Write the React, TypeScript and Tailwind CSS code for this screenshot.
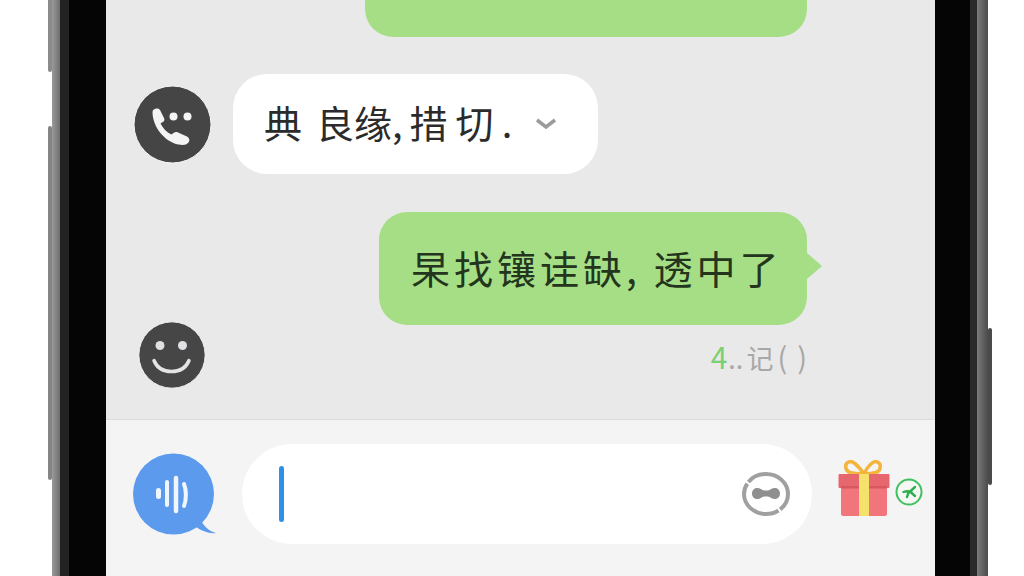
import React from 'react';

const cjk = "font-['Noto_Sans_CJK_SC','Noto_Sans',sans-serif]";

const PhoneAvatar = () => (
  <svg width="79" height="79" viewBox="0 0 79 79" className="shrink-0">
    <circle cx="39.500" cy="39.500" r="38.500" fill="#454545" stroke="#f5f5f5" strokeWidth="1" />
    <path d="M19.500 27c0-3 5-5 7.500-2l4 8c1 2 0 3.500-2 4.500l-1.500 1c2.500 5 6.500 9 11 11l2-1.500c1.500-1 3-1.300 4.500-.5l9 4c2.500 1.300 3 4 1.500 6-2 2.500-5.500 3-10 2C32 57 19.500 42 19.500 27z" fill="#f4f4f4" />
    <circle cx="40.500" cy="31.500" r="4" fill="#f4f4f4" />
    <circle cx="54.500" cy="31.500" r="4" fill="#f4f4f4" />
  </svg>
);

const SmileAvatar = () => (
  <svg width="68" height="68" viewBox="0 0 68 68" className="shrink-0">
    <circle cx="34" cy="34" r="33.200" fill="#464646" stroke="#f5f5f5" strokeWidth="1" />
    <circle cx="22" cy="24.500" r="4.500" fill="#dfdfe4" />
    <circle cx="44.500" cy="24.500" r="4.500" fill="#dfdfe4" />
    <path d="M16 39.500c3 7.500 10 11 17.500 11s14.500-3.500 17.500-11" fill="none" stroke="#e4e4e4" strokeWidth="3.500" strokeLinecap="round" />
  </svg>
);

const VoiceIcon = () => (
  <svg width="84" height="84" viewBox="0 0 84 84" className="shrink-0">
    <circle cx="40.500" cy="41" r="40.500" fill="#5b9aec" />
    <path d="M66 64c3 7 9 14 17 16-6 1-15-2-23-8z" fill="#5b9aec" />
    <g fill="none" stroke="#f1f6fd" strokeLinecap="round">
      <path d="M25.500 37.500v6" strokeWidth="5" />
      <path d="M34 29v23" strokeWidth="4" />
      <path d="M43 25v33" strokeWidth="4.500" />
      <path d="M51 31c2.500 6 2.500 16 0 22" strokeWidth="4" />
    </g>
  </svg>
);

const LinkIcon = () => (
  <svg width="48" height="44" viewBox="0 0 48 44" className="shrink-0">
    <ellipse cx="24" cy="22" rx="22" ry="20" fill="none" stroke="#a0a0a0" strokeWidth="4" pathLength="100" strokeDasharray="13.500 1.500 43.500 1.500 40.500 0" />
    <path d="M15 16c3 0 5 2 7 2.500h4c2-.5 4-2.500 7-2.500 3 0 5 2.500 5 5.500s-2 5.500-5 5.500c-3 0-5-2-7-2.500h-4c-2 .5-4 2.500-7 2.500-3 0-5-2.500-5-5.500s2-5.500 5-5.500z" fill="#8f8f8f" />
  </svg>
);

const GiftIcon = () => (
  <svg width="52" height="57" viewBox="0 0 52 57" className="shrink-0">
    <path d="M26 14C20 5 14 .5 11 1.800 6 3.500 7 11 12 12.500c4 1.300 10 1.500 14 1.500zM26 14c4-9 10-13.500 13-12.200 5 1.700 4 9.200-1 10.700-4 1.300-8 1.500-12 1.500z" fill="none" stroke="#f4b53c" strokeWidth="3.500" />
    <rect x="3" y="26" width="46" height="30" rx="2" fill="#f0767c" />
    <rect x="0.500" y="14" width="51" height="14" rx="1" fill="#e6676e" />
    <rect x="3" y="26" width="46" height="2.500" fill="#d9585f" />
    <rect x="21" y="14" width="10" height="42" fill="#f5e26a" />
  </svg>
);

const GreenBadge = () => (
  <svg width="28" height="28" viewBox="0 0 28 28" className="shrink-0">
    <circle cx="14" cy="14" r="12.500" fill="#f5f8f3" stroke="#3fc05f" strokeWidth="2" />
    <path d="M20 9l-5 4.500 5 4.500M8.500 14c2.500-1 4.500-1 6.500-.5-1.500 1-2.500 3-3 5.500" fill="none" stroke="#2fae50" strokeWidth="2.400" strokeLinecap="round" />
  </svg>
);

export default function App() {
  return (
    <div className={`flex w-[1024px] h-[576px] overflow-hidden bg-white ${cjk}`}>
      {/* left edge of the phone */}
      <div className="flex h-full w-[106px] shrink-0">
        <div className="w-[48px] shrink-0" />
        <div className="flex w-[4px] shrink-0 flex-col">
          <div className="h-[72px] rounded-b-sm bg-[#8b8b8b]" />
          <div className="h-[54px]" />
          <div className="h-[354px] rounded-sm bg-[#858585]" />
        </div>
        <div className="w-[8px] shrink-0 bg-gradient-to-r from-[#9a9a9a] to-[#6f6f6f]" />
        <div className="w-[9px] shrink-0 bg-[#232323]" />
        <div className="flex-1 bg-[#050505]" />
      </div>

      {/* screen */}
      <div className="flex h-full w-[829px] shrink-0 flex-col">
        <div className="flex h-[419px] flex-col bg-[#e9e9ea]">
          <div className="flex h-[37px] justify-end pr-[128px]">
            <div className="h-full w-[442px] rounded-b-[28px] bg-[#a6de86]" />
          </div>

          <div className="mt-[37px] flex items-center pl-[27px]">
            <PhoneAvatar />
            <div className="ml-[21px] flex h-[100px] w-[365px] items-center rounded-[34px] bg-white pb-[4px] pl-[31px] text-[38px] leading-none text-[#2b2b2b]">
              <span>典</span>
              <span className="ml-[14px]">良缘,</span>
              <span className="ml-[7px]">措</span>
              <span className="ml-[8px]">切</span>
              <span className="ml-[8px]">.</span>
              <svg width="24" height="14" viewBox="0 0 24 14" className="ml-[22px] mt-[4px]">
                <path d="M3 3l9 7 9-7" fill="none" stroke="#9b9b9b" strokeWidth="3.500" />
              </svg>
            </div>
          </div>

          <div className="mt-[38px] flex justify-end pr-[113px]">
            <div className="flex h-[113px] w-[443px] items-center">
              <div className="flex h-full w-[428px] items-center rounded-[28px] bg-[#a6de86] pb-[3px] pl-[32px] text-[39px] leading-none tracking-[4px] whitespace-nowrap text-[#24351d]">
                杲找镶诖缺, 透中了
              </div>
              <div className="mb-[5px] h-0 w-0 border-y-[13px] border-l-[15px] border-y-transparent border-l-[#a6de86]" />
            </div>
          </div>

          <div className="-mt-[4px] flex items-start justify-between pl-[32px] pr-[128px]">
            <SmileAvatar />
            <div className="mt-[17px] flex items-baseline text-[27px] leading-[36px] text-[#a8a8a8]">
              <span className="text-[30px] text-[#7ccf72]">4</span>
              <span className="ml-[1px]">..</span>
              <span className="ml-[3px]">记</span>
              <span className="ml-[4px] text-[29px]">(</span>
              <span className="ml-[10px] text-[29px]">)</span>
            </div>
          </div>
        </div>

        <div className="flex flex-1 items-start border-t border-[#dcdcdc] bg-[#f4f4f5] pl-[27px] pt-[24px]">
          <div className="mt-[9px]">
            <VoiceIcon />
          </div>
          <div className="ml-[25px] flex h-[100px] w-[570px] items-center rounded-[50px] bg-white pl-[37px] pr-[22px]">
            <div className="h-[56px] w-[5px] rounded-sm bg-[#2f90ea]" />
            <div className="ml-auto">
              <LinkIcon />
            </div>
          </div>
          <div className="ml-[26px] mt-[16px]">
            <GiftIcon />
          </div>
          <div className="ml-[5px] mt-[34px]">
            <GreenBadge />
          </div>
        </div>
      </div>

      {/* right edge of the phone */}
      <div className="flex h-full flex-1">
        <div className="w-[35px] shrink-0 bg-[#050505]" />
        <div className="w-[7px] shrink-0 bg-[#2a2a2a]" />
        <div className="w-[11px] shrink-0 bg-gradient-to-r from-[#7b7b7b] to-[#4b4b4b]" />
        <div className="flex w-[4px] shrink-0 flex-col">
          <div className="h-[328px]" />
          <div className="h-[157px] rounded-sm bg-[#4a4a4a]" />
        </div>
      </div>
    </div>
  );
}
